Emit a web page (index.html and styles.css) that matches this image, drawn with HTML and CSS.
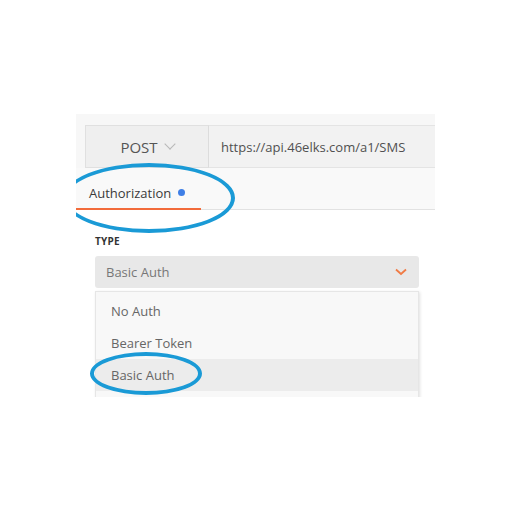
FILE: index.html
```html
<!DOCTYPE html>
<html lang="en">
<head>
    <meta charset="UTF-8">
    <title>Authorization - Basic Auth</title>
    <link rel="stylesheet" href="styles.css">
</head>
<body>
    <div class="shot">
        <div class="request-bar">
            <div class="method">POST <span class="method-caret"></span></div>
            <div class="url">https://api.46elks.com/a1/SMS</div>
        </div>
        <div class="tabs">
            <div class="tab active">Authorization <span class="dot"></span></div>
        </div>
        <div class="auth-body">
            <div class="type-label">TYPE</div>
            <div class="select">
                <span>Basic Auth</span>
                <svg class="chevron" width="12" height="8" viewBox="0 0 12 8"><path d="M1 1.5 L6 6 L11 1.5" fill="none" stroke="#f07b45" stroke-width="1.8"/></svg>
            </div>
            <ul class="menu">
                <li>No Auth</li>
                <li>Bearer Token</li>
                <li class="hover">Basic Auth</li>
                <li></li>
            </ul>
        </div>

        <!-- annotation rings -->
        <div class="ring ring-tab"></div>
        <div class="ring ring-item"></div>
    </div>
</body>
</html>
```

FILE: styles.css
```css
body {
    margin: 0;
    background: #fff;
    font-family: "Open Sans", "Liberation Sans", sans-serif;
}
.shot {
    position: relative;
    width: 359px;
    height: 283px;
    margin: 114px 0 0 76px;
    overflow: hidden;
    background: #fff;
}
.request-bar {
    display: flex;
    padding: 11px 0 0 9px;
    background: #f7f7f7;
}
.method {
    width: 124px;
    height: 43px;
    box-sizing: border-box;
    display: flex;
    align-items: center;
    justify-content: center;
    gap: 8px;
    background: #efefef;
    border: 1px solid #e0e0e0;
    border-right: 1px solid #dcdcdc;
    font-size: 15px;
    color: #555;
}
.method-caret {
    width: 7px;
    height: 7px;
    border-right: 1px solid #b8b8b8;
    border-bottom: 1px solid #b8b8b8;
    transform: rotate(45deg);
    margin-top: -5px;
}
.url {
    flex: 1;
    height: 43px;
    box-sizing: border-box;
    display: flex;
    align-items: center;
    padding-left: 12px;
    background: #f2f2f2;
    border-top: 1px solid #e4e4e4;
    border-bottom: 1px solid #e4e4e4;
    font-size: 13px;
    color: #505050;
}
.tabs {
    height: 42px;
    box-sizing: border-box;
    display: flex;
    background: #f9f9f9;
    border-bottom: 1px solid #e2e2e2;
}
.tab {
    display: flex;
    align-items: center;
    gap: 7px;
    padding: 0 14px 0 13px;
    font-size: 13px;
    color: #3a3a3a;
}
.tab.active {
    width: 125px;
    box-sizing: border-box;
    border-bottom: 2px solid #f26b3a;
    padding-top: 9px;
    margin-bottom: -1px;
}
.dot {
    width: 7px;
    height: 7px;
    border-radius: 50%;
    background: #3f7fe6;
}
.auth-body {
    padding: 24px 16px 0 19px;
}
.type-label {
    font-size: 10px;
    font-weight: bold;
    color: #333;
    letter-spacing: 0.2px;
    margin-bottom: 8px;
}
.select {
    height: 32px;
    display: flex;
    align-items: center;
    justify-content: space-between;
    padding: 0 12px 0 11px;
    background: #e8e8e8;
    border-radius: 3px;
    font-size: 13px;
    color: #777;
}
.menu {
    list-style: none;
    margin: 3px 0 0;
    padding: 3px 0 0;
    background: #f8f8f8;
    border: 1px solid #e6e6e6;
    border-bottom: none;
    box-shadow: 1px 1px 3px rgba(0, 0, 0, 0.12);
}
.menu li {
    height: 32px;
    display: flex;
    align-items: center;
    padding-left: 15px;
    font-size: 13px;
    color: #666;
}
.menu li.hover {
    background: #ececec;
}
.ring {
    position: absolute;
    border: 4px solid #1a9ad6;
    border-radius: 50%;
    box-sizing: border-box;
}
.ring-tab {
    left: -13px;
    top: 49px;
    width: 172px;
    height: 70px;
}
.ring-item {
    left: 14px;
    top: 238px;
    width: 112px;
    height: 43px;
}
```
